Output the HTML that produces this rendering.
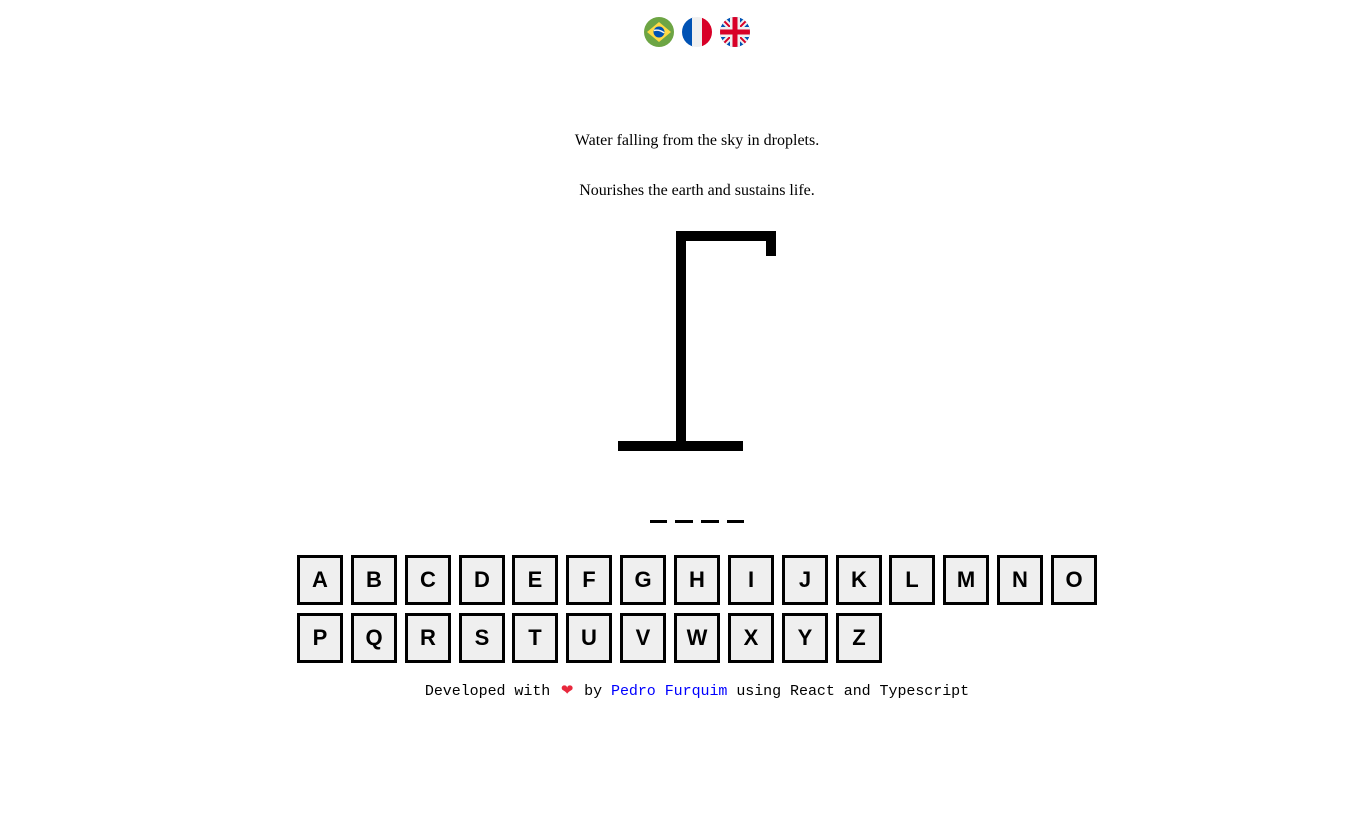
<!DOCTYPE html>
<html><head><meta charset="utf-8"><style>
body{margin:0;width:1345px;height:834px;background:#fff;position:relative;font-family:"Liberation Serif",serif;overflow:hidden}
.abs{position:absolute}
.hint{position:absolute;left:0;width:1394px;text-align:center;font-size:16px;color:#000}
.k{position:absolute;width:40px;height:44px;border:3px solid #000;background:#efefef;font:bold 22px "Liberation Sans",sans-serif;text-align:center;line-height:44px;color:#000}
.foot{position:absolute;left:0;width:1394px;top:681px;text-align:center;font:15px "Liberation Mono",monospace;color:#000;letter-spacing:-0.05px}
.b{background:#000;position:absolute}
</style></head><body>
<svg class="abs" style="left:643px;top:16px" width="110" height="32" viewBox="0 0 110 32">
<defs><clipPath id="c2"><circle cx="54" cy="16" r="15"/></clipPath><clipPath id="c3"><circle cx="92" cy="16" r="15"/></clipPath></defs>
<circle cx="16" cy="16" r="15" fill="#6da544"/>
<polygon points="16,6 28,16 16,26 4,16" fill="#ffda44"/>
<circle cx="16" cy="16" r="5.5" fill="#0052b4"/>
<path d="M10.8 14.5 Q16 13 21.2 16.8" stroke="#f0f0f0" stroke-width="1.5" fill="none"/>
<g clip-path="url(#c2)"><rect x="39" y="0" width="11" height="32" fill="#0052b4"/><rect x="49" y="0" width="10" height="32" fill="#f0f0f0"/><rect x="59" y="0" width="11" height="32" fill="#d80027"/></g>
<g clip-path="url(#c3)"><rect x="77" y="0" width="30" height="32" fill="#0052b4"/>
<path d="M77 1 L107 31 M107 1 L77 31" stroke="#f0f0f0" stroke-width="6"/>
<path d="M77 1 L107 31 M107 1 L77 31" stroke="#d80027" stroke-width="2"/>
<rect x="77" y="11" width="30" height="10" fill="#f0f0f0"/><rect x="87" y="0" width="10" height="32" fill="#f0f0f0"/>
<rect x="77" y="13.5" width="30" height="5" fill="#d80027"/><rect x="89.5" y="0" width="5" height="32" fill="#d80027"/></g>
</svg>
<div class="hint" style="top:132px">Water falling from the sky in droplets.</div>
<div class="hint" style="top:182px">Nourishes the earth and sustains life.</div>
<div class="b" style="left:676px;top:231px;width:100px;height:10px"></div>
<div class="b" style="left:676px;top:231px;width:10px;height:220px"></div>
<div class="b" style="left:766px;top:231px;width:10px;height:25px"></div>
<div class="b" style="left:618px;top:441px;width:125px;height:10px"></div>
<div class="b" style="left:650px;top:520px;width:17px;height:3px"></div>
<div class="b" style="left:675px;top:520px;width:18px;height:3px"></div>
<div class="b" style="left:701px;top:520px;width:18px;height:3px"></div>
<div class="b" style="left:727px;top:520px;width:17px;height:3px"></div>
<div class="k" style="left:297px;top:555px">A</div><div class="k" style="left:351px;top:555px">B</div><div class="k" style="left:405px;top:555px">C</div><div class="k" style="left:459px;top:555px">D</div><div class="k" style="left:512px;top:555px">E</div><div class="k" style="left:566px;top:555px">F</div><div class="k" style="left:620px;top:555px">G</div><div class="k" style="left:674px;top:555px">H</div><div class="k" style="left:728px;top:555px">I</div><div class="k" style="left:782px;top:555px">J</div><div class="k" style="left:836px;top:555px">K</div><div class="k" style="left:889px;top:555px">L</div><div class="k" style="left:943px;top:555px">M</div><div class="k" style="left:997px;top:555px">N</div><div class="k" style="left:1051px;top:555px">O</div>
<div class="k" style="left:297px;top:613px">P</div><div class="k" style="left:351px;top:613px">Q</div><div class="k" style="left:405px;top:613px">R</div><div class="k" style="left:459px;top:613px">S</div><div class="k" style="left:512px;top:613px">T</div><div class="k" style="left:566px;top:613px">U</div><div class="k" style="left:620px;top:613px">V</div><div class="k" style="left:674px;top:613px">W</div><div class="k" style="left:728px;top:613px">X</div><div class="k" style="left:782px;top:613px">Y</div><div class="k" style="left:836px;top:613px">Z</div>
<div class="foot">Developed with <span style="color:#e8283c;display:inline-block;width:16px;text-align:center">&#10084;</span> by <span style="color:#0000ff">Pedro Furquim</span> using React and Typescript</div>
</body></html>
